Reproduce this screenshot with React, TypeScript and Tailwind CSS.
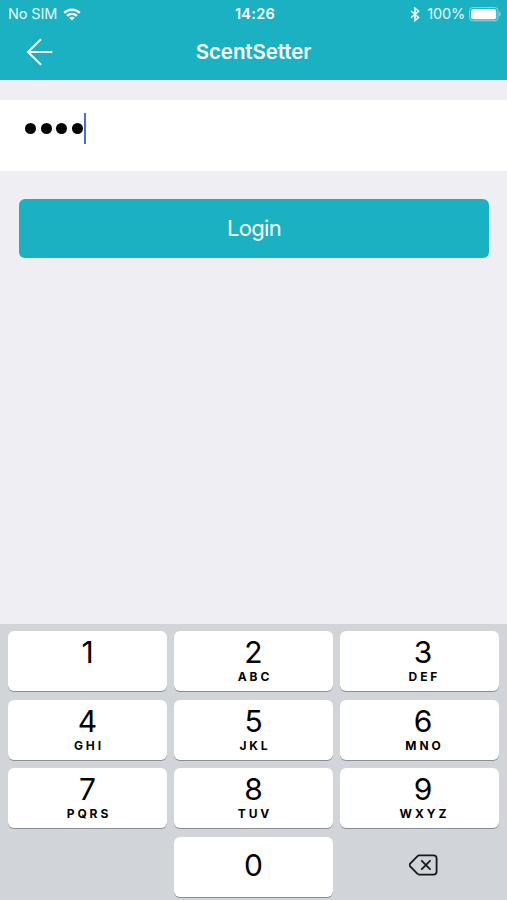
import clsx from 'clsx';

const KEYS = [
  { digit: '1', letters: '' },
  { digit: '2', letters: 'ABC' },
  { digit: '3', letters: 'DEF' },
  { digit: '4', letters: 'GHI' },
  { digit: '5', letters: 'JKL' },
  { digit: '6', letters: 'MNO' },
  { digit: '7', letters: 'PQRS' },
  { digit: '8', letters: 'TUV' },
  { digit: '9', letters: 'WXYZ' },
];

const keyStyle = 'h-[60px] rounded-[6px] bg-white shadow-[0_1px_0.5px_#8b8e94] flex flex-col items-center text-black';

function WifiIcon() {
  return (
    <svg width="18" height="13" viewBox="0 0 18 13" fill="none" stroke="white" strokeWidth="2.3">
      <path d="M1.2 4.9 C5.5 0.6 12.5 0.6 16.8 4.9" />
      <path d="M4.1 7.9 C6.8 5.2 11.2 5.2 13.9 7.9" />
      <path d="M9 12.4 L6.3 9.7 C7.8 8.3 10.2 8.3 11.7 9.7 Z" fill="white" stroke="none" />
    </svg>
  );
}

function BluetoothIcon() {
  return (
    <svg width="10" height="15" viewBox="0 0 10 15" fill="none" stroke="white" strokeWidth="1.5">
      <path d="M1 4 L8.6 10.5 L5 13.6 V1.2 L8.6 4.3 L1 10.8" />
    </svg>
  );
}

function BatteryIcon() {
  return (
    <svg width="33" height="15" viewBox="0 0 33 15" fill="none">
      <rect x="0.6" y="0.6" width="28.4" height="13.2" rx="3.2" stroke="white" strokeOpacity="0.5" strokeWidth="1" />
      <rect x="2.2" y="2.2" width="25" height="10" rx="1.8" fill="white" />
      <path d="M30.3 5 C32 5.6 32 8.8 30.3 9.4 Z" fill="white" fillOpacity="0.55" />
    </svg>
  );
}

function BackspaceIcon() {
  return (
    <svg width="29" height="22" viewBox="0 0 29 22" fill="none" stroke="#17191c" strokeWidth="1.8" strokeLinejoin="round" strokeLinecap="round">
      <path d="M10.2 1.4 H24.4 C26.6 1.4 27.6 2.5 27.6 4.6 V17.4 C27.6 19.5 26.6 20.6 24.4 20.6 H10.2 C9.4 20.6 8.9 20.3 8.3 19.7 L1.2 12.4 C0.5 11.6 0.5 10.4 1.2 9.6 L8.3 2.3 C8.9 1.7 9.4 1.4 10.2 1.4 Z" />
      <path d="M12.8 6.8 L21 15.2 M21 6.8 L12.8 15.2" />
    </svg>
  );
}

export default function App() {
  return (
    <div className="w-full h-[900px] flex flex-col overflow-hidden bg-[#efeef3] font-['Inter',sans-serif]">
      {/* Status bar + navigation */}
      <header className="h-20 shrink-0 bg-[#1ab2c3] text-white">
        <div className="h-[27px] pt-px grid grid-cols-3 items-center pl-[8px] pr-[5px] text-[14.5px] leading-none">
          <div className="flex items-center gap-[6px]">
            <span className="tracking-[-0.15px] opacity-90">No SIM</span>
            <WifiIcon />
          </div>
          <span className="text-center font-semibold tracking-[0.3px]">14:26</span>
          <div className="flex items-center justify-end">
            <BluetoothIcon />
            <span className="ml-[7px] mr-[4px] tracking-[-0.2px] opacity-90">100%</span>
            <BatteryIcon />
          </div>
        </div>
        <div className="h-[50px] grid grid-cols-[1fr_auto_1fr] items-center">
          <button className="ml-[26px] w-7" aria-label="Back">
            <svg width="28" height="28" viewBox="0 0 28 28" fill="none" stroke="white" strokeWidth="1.9" strokeLinecap="round">
              <path d="M14.5 1.8 L2 14 L14.5 26.2 M2 14 H25.5" />
            </svg>
          </button>
          <h1 className="pt-px text-[20.5px] font-semibold tracking-[-0.1px]">ScentSetter</h1>
        </div>
      </header>

      {/* Passcode field */}
      <div className="mt-5 h-[71px] shrink-0 bg-white flex items-start pl-[25px] pt-[13px]">
        <div className="flex items-center h-[31px] gap-[4.7px]">
          {[0, 1, 2, 3].map((i) => (
            <span key={i} className="size-[11px] rounded-full bg-black" />
          ))}
        </div>
        <span className="ml-[0.7px] w-[2.6px] h-[31px] bg-[#4a68ea]" />
      </div>

      <button className="mt-[28px] ml-[19px] mr-[18px] h-[59px] shrink-0 rounded-[6px] bg-[#1ab2c3] text-white text-[22px] tracking-[-0.7px]">
        Login
      </button>

      {/* Number pad */}
      <div className="mt-auto h-[276px] shrink-0 bg-[#d1d4d9] px-[8px] pt-[7px]">
        <div className="grid grid-cols-3 gap-x-[7px] gap-y-[8.6px]">
          {KEYS.map((k, i) => (
            <button key={k.digit} className={clsx(keyStyle, 'pt-[6px]', i % 3 === 2 && 'pl-[7px]')}>
              <span className="text-[30px] leading-[30px]">{k.digit}</span>
              {k.letters && (
                <span className="mt-[4px] pl-[2.9px] text-[12px] leading-[12px] font-bold tracking-[2.9px]">{k.letters}</span>
              )}
            </button>
          ))}
          <div />
          <button className={clsx(keyStyle, 'justify-center pb-[4px]')}>
            <span className="text-[30px] leading-[30px]">0</span>
          </button>
          <button className="h-[60px] flex items-center justify-center pl-[8px] pb-[4px]" aria-label="Delete">
            <BackspaceIcon />
          </button>
        </div>
      </div>
    </div>
  );
}
